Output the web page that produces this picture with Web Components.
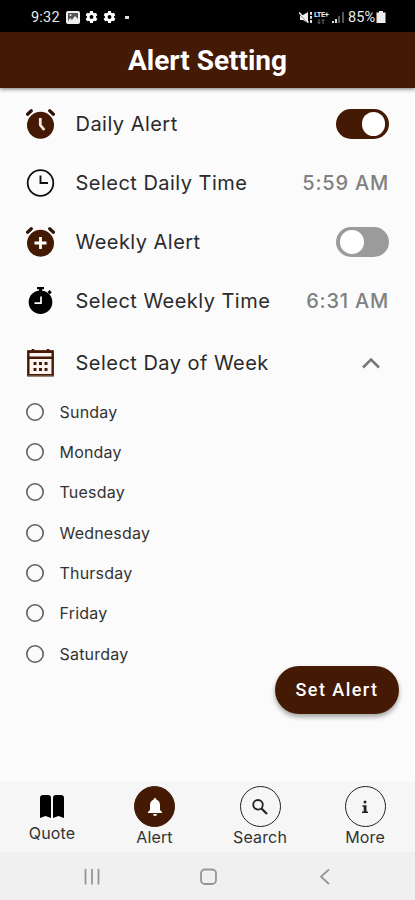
<!DOCTYPE html>
<html lang="en">
<head>
<meta charset="utf-8">
<title>Alert Setting</title>
<style>
    body {
        margin: 0;
        width: 415px;
        height: 900px;
        overflow: hidden;
        font-family: Inter, Roboto, sans-serif;
    }
</style>
</head>
<body>
<alert-app></alert-app>

<script>
const ears = `<path d="M1.600 5.200L5.300 1.800M27.400 5.200L23.700 1.800" fill="none" stroke="#2e1208" stroke-width="3.200" stroke-linecap="round"/><circle cx="14.500" cy="16" r="14.300" fill="#fbfbfb"/><circle cx="14.500" cy="16.200" r="13.500" fill="#451a05"/>`;
const icons = {
    alarm: `${ears}<path d="M14.300 9v7l4 5" fill="none" stroke="#f3e6df" stroke-width="2.800"/>`,
    alarmAdd: `${ears}<path d="M14.500 10v12M8.500 16h12" fill="none" stroke="#fff" stroke-width="2.800"/>`,
    clock: `<circle cx="14.500" cy="15" r="12.800" fill="none" stroke="#111" stroke-width="1.800"/><path d="M14.500 7.500v7.500h7.500" fill="none" stroke="#111" stroke-width="1.900"/>`,
    stopwatch: `<path d="M11 1h7v2.200h-2v3h-3v-3h-2zM21.500 6l2.200-2 2 2.200-2 2.200z" fill="#000"/><circle cx="14.500" cy="16.200" r="11.800" fill="#000"/><path d="M15 10.500v6.700H8.500" fill="none" stroke="#fff" stroke-width="1.700"/>`,
    calendar: `<path d="M2.300 3.500h24.400v23.800H2.300z" fill="#fbf3f0" stroke="#451a05" stroke-width="2.400"/><path d="M2 3.800h25M1.500 9.800h26M7 1v4M22 1v4" stroke="#451a05" stroke-width="2.600"/><path d="M2 28h25" stroke="#9c8177" stroke-width="1"/><path d="M7.500 15.500h3M13 15.500h3M18.500 15.500h3M7.500 21.500h3M13 21.500h3M18.500 21.500h3" stroke="#451a05" stroke-width="2.800"/>`
};

customElements.define(
    'status-bar',

    class extends HTMLElement {
        constructor() {
            super();

            const gear = `<svg width="13" height="14" viewBox="0 0 24 24"><g fill="#fff"><circle cx="12" cy="12" r="8.500"/><path d="M9.500 1h5l1 5h-7zM9.500 23h5l1-5h-7z"/><path d="M9.500 1h5l1 5h-7zM9.500 23h5l1-5h-7z" transform="rotate(60 12 12)"/><path d="M9.500 1h5l1 5h-7zM9.500 23h5l1-5h-7z" transform="rotate(120 12 12)"/></g><circle cx="12" cy="12" r="3.600" fill="#000"/></svg>`;
            const shadow = this.attachShadow({ mode: "open" });
            shadow.innerHTML = `
            <style>
                :host {
                    display: flex;
                    align-items: center;
                    box-sizing: border-box;
                    height: 32px;
                    padding: 2px 29px 0 31px;
                    background: #000;
                    color: #e8e8e8;
                    font: 14.5px/20px Roboto, sans-serif;
                }
                svg { display: block; flex: none; }
                .time { width: 34px; margin-right: -4px; padding-top: 1px; letter-spacing: 0.2px; }
                .left, .right { display: flex; align-items: center; }
                .left { gap: 5px; flex: 1; }
                .dot { width: 4px; height: 3px; margin-left: 4px; background: #ddd; }
                .lte { width: 17px; margin-right: 1px; font: bold 7.5px/8px Roboto, sans-serif; letter-spacing: -0.5px; }
                .lte svg { margin-left: 3px; }
                .percent { margin: 0 1px 0 3px; padding-top: 2px; }
            </style>
            <div class="left">
                <span class="time">9:32</span>
                <svg width="14" height="13" viewBox="0 0 14 13"><rect width="14" height="13" rx="2" fill="#eee"/><path d="M2 10.500V2h10v6L9 5 6 9 4 7z" fill="#555"/><circle cx="4.500" cy="4" r="1" fill="#eee"/></svg>
                ${gear}${gear}
                <i class="dot"></i>
            </div>
            <div class="right">
                <svg width="15" height="13" viewBox="0 0 15 13"><path d="M1 4h3l5-3v11L4 9H1z" fill="#eee"/><path d="M0 2.500l9 9" stroke="#000"/><path d="M0 1.500l9.500 10" stroke="#eee" stroke-width="1.500"/><path d="M12 1v2.800M12 5v2.800M12 9v3" stroke="#ddd" stroke-width="2"/></svg>
                <div class="lte">LTE+<svg width="8" height="5" viewBox="0 0 8 5"><path d="M2 0v4.500M.5 3L2 4.500 3.500 3M6 5V.5M4.500 2L6 .5 7.500 2" fill="none" stroke="#777" stroke-width=".9"/></svg></div>
                <svg width="13" height="13" viewBox="0 0 13 13"><path d="M1 10v2M4 8v4" stroke="#ddd" stroke-width="2"/><path d="M7 5v7M11 1v11" stroke="#555" stroke-width="2"/></svg>
                <span class="percent">85%</span>
                <svg width="10" height="12" viewBox="0 0 10 12"><path d="M3 0h4v1.500h2.500V12H.5V1.500H3z" fill="#eee"/></svg>
            </div>
            `
        }
    }
);

customElements.define(
    'app-header',

    class extends HTMLElement {
        constructor() {
            super();

            const shadow = this.attachShadow({ mode: "open" });
            shadow.innerHTML = `
            <style>
                :host {
                    display: flex;
                    justify-content: center;
                    align-items: center;
                    box-sizing: border-box;
                    height: 56px;
                    padding-top: 2px;
                    background: #451a05;
                    color: #fff;
                    font: bold 28px/32px Roboto, sans-serif;
                    box-shadow: 0 1px 4px rgba(0, 0, 0, .55);
                }
            </style>
            <slot></slot>
            `
        }
    }
);

customElements.define(
    'setting-row',

    class extends HTMLElement {
        constructor() {
            super();
            this.attachShadow({ mode: "open" });
        }

        connectedCallback() {
            this.shadowRoot.innerHTML = `
            <style>
                :host {
                    display: flex;
                    align-items: center;
                    height: 59px;
                    color: #2a2a2a;
                    font-size: 20px;
                    line-height: 28px;
                    letter-spacing: 0.47px;
                }
                svg { width: 29px; height: 30px; margin-right: 20.5px; flex: none; }
                .label { flex: 1; white-space: nowrap; }
            </style>
            <svg viewBox="0 0 29 30">${icons[this.getAttribute("icon")]}</svg>
            <span class="label"><slot></slot></span>
            <slot name="end"></slot>
            `
        }
    }
);

customElements.define(
    'toggle-switch',

    class extends HTMLElement {
        constructor() {
            super();

            const shadow = this.attachShadow({ mode: "open" });
            shadow.innerHTML = `
            <style>
                :host {
                    display: flex;
                    align-items: center;
                    box-sizing: border-box;
                    width: 53px;
                    height: 30px;
                    padding: 0 4px;
                    border-radius: 15px;
                    background: #9b9b9b;
                }
                :host([on]) { justify-content: flex-end; background: #451a05; }
                i { width: 23.5px; height: 23.5px; border-radius: 50%; background: #fff; }
            </style>
            <i></i>
            `
        }
    }
);

customElements.define(
    'day-option',

    class extends HTMLElement {
        constructor() {
            super();

            const shadow = this.attachShadow({ mode: "open" });
            shadow.innerHTML = `
            <style>
                :host {
                    display: flex;
                    align-items: center;
                    height: 40.35px;
                    gap: 15.5px;
                    color: #333;
                    font-size: 16px;
                    line-height: 22px;
                    letter-spacing: 0.2px;
                }
                svg { display: block; }
            </style>
            <svg width="18" height="18"><circle cx="9" cy="9" r="8.200" fill="none" stroke="#5e5e5e" stroke-width="1.600"/></svg>
            <span><slot></slot></span>
            `
        }
    }
);

customElements.define(
    'pill-button',

    class extends HTMLElement {
        constructor() {
            super();

            const shadow = this.attachShadow({ mode: "open" });
            shadow.innerHTML = `
            <style>
                :host {
                    display: flex;
                    align-items: center;
                    justify-content: center;
                    width: 124px;
                    height: 48px;
                    border-radius: 24px;
                    background: #451a05;
                    color: #fff;
                    font: 500 18px/24px Roboto, sans-serif;
                    letter-spacing: 1.45px;
                    box-shadow: 0 3px 5px rgba(0, 0, 0, .35);
                }
            </style>
            <slot></slot>
            `
        }
    }
);

customElements.define(
    'nav-item',

    class extends HTMLElement {
        constructor() {
            super();

            const shadow = this.attachShadow({ mode: "open" });
            shadow.innerHTML = `
            <style>
                :host {
                    display: flex;
                    flex-direction: column;
                    align-items: center;
                    color: #333;
                    font-size: 16px;
                    line-height: 20px;
                    letter-spacing: 0.15px;
                }
                .icon {
                    display: flex;
                    box-sizing: border-box;
                    width: 41px;
                    height: 41px;
                    border: 1.5px solid #222;
                    border-radius: 50%;
                    justify-content: center;
                    align-items: center;
                }
                :host([active]) .icon { background: #451a05; border-color: #451a05; }
                :host([plain]) .icon { border: 0; height: 37px; padding-top: 4px; }
            </style>
            <div class="icon"><slot name="icon"></slot></div>
            <span><slot></slot></span>
            `
        }
    }
);

customElements.define(
    'system-bar',

    class extends HTMLElement {
        constructor() {
            super();

            const shadow = this.attachShadow({ mode: "open" });
            shadow.innerHTML = `
            <style>
                :host {
                    display: flex;
                    align-items: center;
                    justify-content: space-between;
                    box-sizing: border-box;
                    height: 48px;
                    padding: 1px 80px 0 82px;
                    background: #f0f0f0;
                }
                svg { fill: none; stroke: #959595; stroke-width: 1.8; }
            </style>
            <svg width="20" height="18"><path d="M3.500 1v15.500M10 1v15.500M16.500 1v15.500"/></svg>
            <svg width="20" height="18"><rect x="2" y="1.500" width="15" height="14.500" rx="4"/></svg>
            <svg width="20" height="18"><path d="M14 1.500L6 8.700l8 7.300"/></svg>
            `
        }
    }
);

customElements.define(
    'alert-app',

    class extends HTMLElement {
        constructor() {
            super();

            const days = ["Sunday", "Monday", "Tuesday", "Wednesday", "Thursday", "Friday", "Saturday"];
            const shadow = this.attachShadow({ mode: "open" });
            shadow.innerHTML = `
            <style>
                :host {
                    display: flex;
                    flex-direction: column;
                    position: relative;
                    height: 900px;
                    background: #fbfbfb;
                }
                main { flex: 1; min-height: 0; padding: 6.5px 26px 0; }
                .time { color: #808080; font-weight: 500; letter-spacing: 0.8px; }
                .week { height: 61px; padding-top: 4px; box-sizing: border-box; }
                .chevron { margin-right: 7px; }
                pill-button { position: absolute; right: 16px; bottom: 186px; }
                nav {
                    display: grid;
                    grid-template-columns: 104px 101px 110px 100px;
                    box-sizing: border-box;
                    height: 71px;
                    padding-top: 5px;
                    background: #f6f6f6;
                }
            </style>
            <status-bar></status-bar>
            <app-header>Alert Setting</app-header>
            <main>
                <setting-row icon="alarm">Daily Alert<toggle-switch slot="end" on></toggle-switch></setting-row>
                <setting-row icon="clock">Select Daily Time<span class="time" slot="end">5:59 AM</span></setting-row>
                <setting-row icon="alarmAdd">Weekly Alert<toggle-switch slot="end"></toggle-switch></setting-row>
                <setting-row icon="stopwatch">Select Weekly Time<span class="time" slot="end">6:31 AM</span></setting-row>
                <setting-row class="week" icon="calendar">Select Day of Week
                    <svg class="chevron" slot="end" width="22" height="14" viewBox="0 0 22 14"><path d="M3 11.500L11 3.500l8 8" fill="none" stroke="#777" stroke-width="2.600"/></svg>
                </setting-row>
                ${days.map(day => `<day-option>${day}</day-option>`).join("")}
            </main>
            <pill-button>Set Alert</pill-button>
            <nav>
                <nav-item plain>
                    <svg slot="icon" width="26" height="26" viewBox="0 0 26 26"><path d="M1 24V4Q1 1 4 1h5q3 0 3 3v20l-5.500-2zM14 24V4q0-3 3-3h5q3 0 3 3v20l-5.500-2z" fill="#000"/></svg>
                    Quote
                </nav-item>
                <nav-item active>
                    <svg slot="icon" width="18" height="20" viewBox="0 0 18 20"><path d="M9 1q1.500 0 1.500 1.700Q14 4 14 8v5l2 2v1H2v-1l2-2V8q0-4 3.500-5.300Q7.500 1 9 1zM7 17h4q0 2-2 2t-2-2z" fill="#fff"/></svg>
                    Alert
                </nav-item>
                <nav-item>
                    <svg slot="icon" width="18" height="18" viewBox="0 0 18 18"><circle cx="7" cy="6.800" r="4.800" fill="none" stroke="#222" stroke-width="1.800"/><path d="M10.500 10.500l5.500 5.500" stroke="#222" stroke-width="2.200"/></svg>
                    Search
                </nav-item>
                <nav-item>
                    <svg slot="icon" width="10" height="16" viewBox="0 0 10 16"><circle cx="5" cy="3" r="1.500" fill="#222"/><path d="M2.500 6.200h4v6.300H8V14H2v-1.500h1.700V7.700H2.500z" fill="#222"/></svg>
                    More
                </nav-item>
            </nav>
            <system-bar></system-bar>
            `
        }
    }
);
</script>
</body>
</html>
